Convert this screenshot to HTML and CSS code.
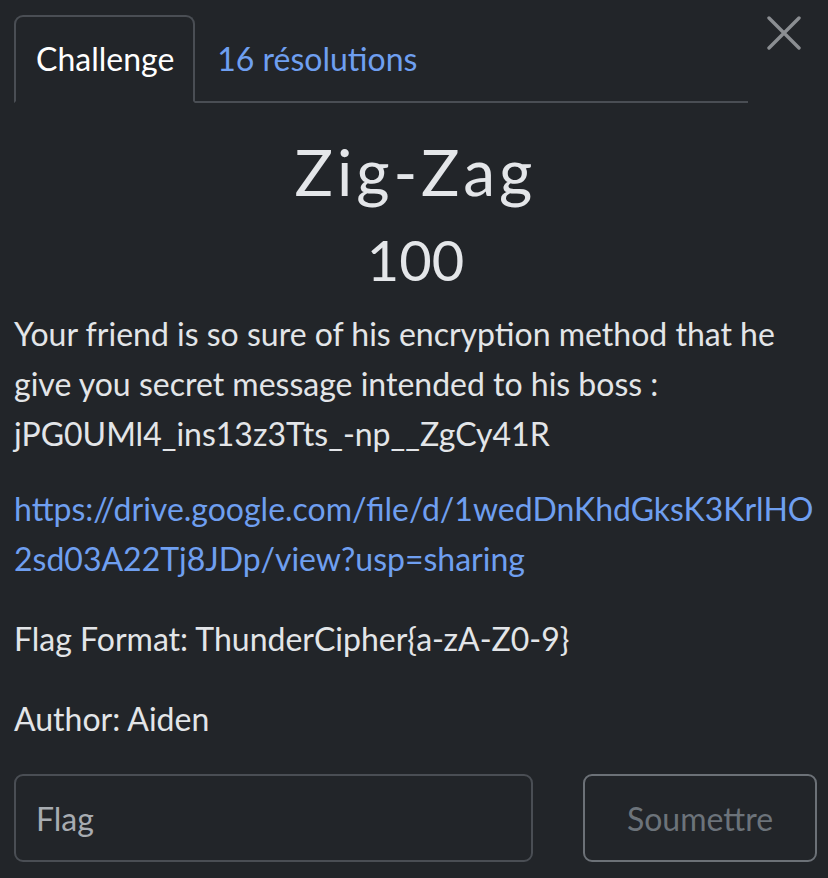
FILE: index.html
```html
<!DOCTYPE html>
<html lang="fr">
<head>
<meta charset="utf-8">
<title>Zig-Zag</title>
<link rel="stylesheet" href="styles.css">
</head>
<body>
<div class="modal">
  <div class="header">
    <ul class="tabs">
      <li class="tab active">Challenge</li>
      <li class="tab"><a href="#">16 résolutions</a></li>
    </ul>
    <button class="close" aria-label="Fermer">
      <svg width="34" height="34" viewBox="0 0 34 34"><path d="M2 2 L32 32 M32 2 L2 32" stroke="#8b8e92" stroke-width="3.4" stroke-linecap="round" fill="none"/></svg>
    </button>
  </div>
  <div class="body">
    <h2 class="name">Zig-Zag</h2>
    <h3 class="value">100</h3>
    <div class="desc">
      <p class="intro">Your friend is so sure of his encryption method that he give you secret message intended to his boss :<br>jPG0UMl4_ins13z3Tts_-np__ZgCy41R</p>
      <p><a href="#">https://drive.google.com/file/d/1wedDnKhdGksK3KrlHO2sd03A22Tj8JDp/view?usp=sharing</a></p>
      <p>Flag Format: ThunderCipher{a-zA-Z0-9}</p>
      <p>Author: Aiden</p>
    </div>
    <form class="submit-row">
      <input class="flag-input" type="text" placeholder="Flag">
      <button class="submit" type="button">Soumettre</button>
    </form>
  </div>
</div>
</body>
</html>
```

FILE: styles.css
```css
html, body {
  margin: 0;
  padding: 0;
  background: #222529;
}
body {
  font-family: Lato, "Noto Sans", sans-serif;
  color: #e3e5e8;
  width: 828px;
  height: 878px;
  overflow: hidden;
}
.modal {
  padding: 15px 11px 0 14px;
}
.header {
  display: flex;
  align-items: flex-start;
}
.tabs {
  list-style: none;
  margin: 0;
  padding: 0;
  display: flex;
  width: 734px;
  border-bottom: 2px solid #4a4e54;
  height: 88px;
  box-sizing: border-box;
}
.tab {
  font-size: 32px;
  line-height: 40px;
  padding: 22px 19px 24px 20px;
  height: 88px;
  box-sizing: border-box;
  border: 2px solid transparent;
  border-radius: 9px 9px 0 0;
  margin-bottom: -2px;
}
.tab.active {
  color: #ffffff;
  border-color: #4a4e54;
  border-bottom-color: #222529;
}
.tab a {
  color: #6f9ff0;
  text-decoration: none;
}
.close {
  background: none;
  border: 0;
  padding: 0;
  margin: 1px 0 0 18px;
  width: 36px;
  height: 34px;
  display: flex;
  align-items: center;
  justify-content: center;
}
.name {
  font-size: 64px;
  font-weight: 400;
  line-height: 77px;
  text-align: center;
  margin: 30px 0 0 0;
  color: #e4e6e9;
  letter-spacing: 4px;
}
.value {
  font-size: 56px;
  font-weight: 400;
  line-height: 67px;
  text-align: center;
  margin: 16px 0 0 0;
  color: #e4e6e9;
}
.desc {
  margin-top: 16px;
  font-size: 32px;
  line-height: 50px;
}
.desc p {
  margin: 0 0 30px 0;
  overflow-wrap: anywhere;
}
.desc p.intro {
  margin-bottom: 25px;
}
.desc a {
  color: #6f9ff0;
  text-decoration: none;
}
.submit-row {
  display: flex;
  gap: 50px;
  margin-top: 28px;
}
.flag-input {
  flex: 0 0 519px;
  width: 519px;
  height: 88px;
  box-sizing: border-box;
  background: transparent;
  border: 2px solid #4a4e54;
  border-radius: 9px;
  font-family: Lato, "Noto Sans", sans-serif;
  font-size: 32px;
  padding: 0 20px;
  color: #e3e5e8;
  outline: none;
}
.flag-input::placeholder {
  color: #a8acb1;
}
.submit {
  flex: 0 0 234px;
  width: 234px;
  height: 88px;
  box-sizing: border-box;
  background: transparent;
  border: 2px solid #6c7177;
  border-radius: 9px;
  font-family: Lato, "Noto Sans", sans-serif;
  font-size: 32px;
  color: #6c737a;
}
```
